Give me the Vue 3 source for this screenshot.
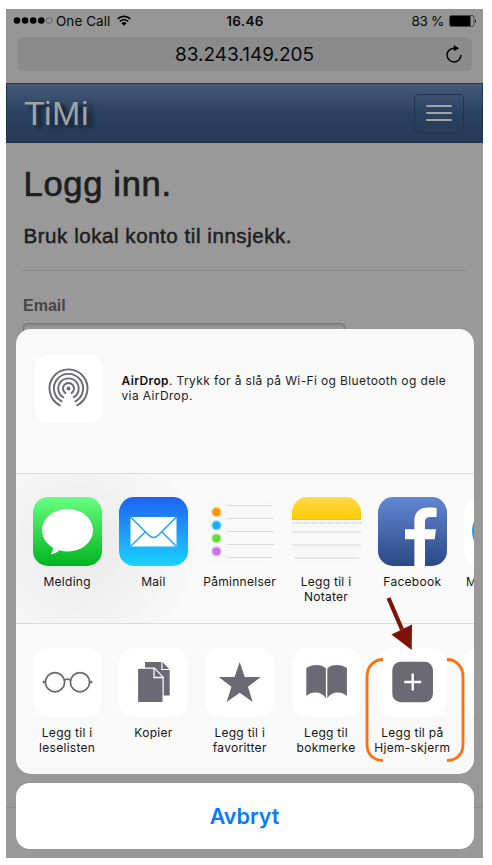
<script setup>
const apps = [
  { id: 'messages', label: ['Melding'] },
  { id: 'mail', label: ['Mail'] },
  { id: 'reminders', label: ['Påminnelser'] },
  { id: 'notes', label: ['Legg til i', 'Notater'] },
  { id: 'facebook', label: ['Facebook'] },
  { id: 'messenger', label: ['M'] }
]
const actions = [
  { id: 'glasses', label: ['Legg til i', 'leselisten'] },
  { id: 'copy', label: ['Kopier'] },
  { id: 'star', label: ['Legg til i', 'favoritter'] },
  { id: 'book', label: ['Legg til', 'bokmerke'] },
  { id: 'home', label: ['Legg til på', 'Hjem-skjerm'] },
  { id: 'more', label: [] }
]
const reminderDots = [
  { y: 15, color: '#ff9500' },
  { y: 28.3, color: '#1badf8' },
  { y: 41.3, color: '#63da38' },
  { y: 54.3, color: '#cc73e1' }
]
const reminderLines = [8.5, 21.5, 34.5, 47.5, 60.5]
</script>

<template>
  <div class="page">
    <div class="phone">
      <div class="status">
        <div class="carrier">
          <svg width="40" height="10" viewBox="0 0 40 10">
            <circle v-for="n in 4" :key="n" :cx="n * 8.1 - 4.1" cy="4.5" r="3.3" fill="#000" />
            <circle cx="36.2" cy="4.5" r="2.9" fill="none" stroke="#555" stroke-width=".7" />
          </svg>
          <span class="carrier-name">One Call</span>
          <svg class="wifi" width="16" height="12" viewBox="0 0 16 12">
            <g fill="none" stroke="#000" stroke-width="1.6">
              <path d="M1.600 3.900a9.300 9.300 0 0 1 12.800 0" />
              <path d="M3.800 6.500a6.100 6.100 0 0 1 8.400 0" />
            </g>
            <path d="M5.500 8.200a3.700 3.700 0 0 1 5 0L8 10.700z" />
          </svg>
        </div>
        <span class="time">16.46</span>
        <div class="power">
          <span class="percent">83 %</span>
          <svg width="28" height="12" viewBox="0 0 28 12">
            <rect x=".5" y=".5" width="24.500" height="11" rx="2" fill="none" stroke="#333" stroke-width=".8" />
            <rect x="1" y="1" width="20.500" height="10" rx="1" fill="#000" />
            <path d="M26 4q2 2 0 4z" fill="#111" />
          </svg>
        </div>
      </div>
      <div class="address">
        <span class="url">83.243.149.205</span>
        <svg class="reload" width="18" height="20" viewBox="0 0 18 20">
          <path d="M9.500 4.200A6.900 6.900 0 1 0 15.900 11" fill="none" stroke="#050505" stroke-width="1.500" />
          <path d="M8.800 1L14 4.200 8.800 7.200z" fill="#050505" />
        </svg>
      </div>
      <div class="navbar">
        <span class="brand">TiMi</span>
        <div class="toggle"><i /><i /><i /></div>
      </div>
      <div class="content">
        <h1>Logg inn.</h1>
        <h2>Bruk lokal konto til innsjekk.</h2>
        <div class="rule" />
        <label>Email</label>
        <div class="field" />
      </div>
      <div class="footer-rule" />

      <div class="overlay">
        <div class="sheet">
          <div class="airdrop">
            <div class="tile">
              <svg width="69" height="69" viewBox="0 0 69 69">
                <circle cx="34.500" cy="34.500" r="1.900" fill="#6b6a74" />
                <g fill="none" stroke="#6b6a74" stroke-width="1.900" stroke-linecap="round">
                  <path d="M31.500 39.100a5.500 5.500 0 1 1 6 0" />
                  <path d="M29.300 43.300a10.200 10.200 0 1 1 10.400 0" />
                  <path d="M27.600 47.300a14.600 14.600 0 1 1 13.800 0" />
                  <path d="M25.800 51.300a19 19 0 1 1 17.400 0" />
                </g>
              </svg>
            </div>
            <p><b>AirDrop</b>. Trykk for å slå på Wi-Fi og Bluetooth og dele<br>via AirDrop.</p>
          </div>

          <div class="row apps">
            <div v-for="app in apps" :key="app.id" class="cell">
              <div class="tile" :class="app.id">
                <svg v-if="app.id === 'messages'" width="69" height="69" viewBox="0 0 69 69">
                  <path d="M34.700 12C20.500 12 9.200 21.400 9.200 33.300c0 7.500 4.300 13.800 11 17.600-.3 2.500-1.300 4.600-2.600 6.400 3.600-.4 6.600-1.800 8.700-4 2.700.8 5.500 1.200 8.400 1.200 14 0 25.300-9.300 25.300-21.200S48.700 12 34.700 12z" fill="#fff" />
                </svg>
                <svg v-else-if="app.id === 'mail'" width="69" height="69" viewBox="0 0 69 69">
                  <path d="M11.500 20h46v29.500h-46z" fill="#fff" />
                  <path d="M11.500 20l18.300 18.200q4.700 4.700 9.400 0L57.500 20M11.500 49.500l15-15M57.500 49.500l-15-15" fill="none" stroke="#219cf8" stroke-width="1.400" />
                </svg>
                <svg v-else-if="app.id === 'reminders'" width="69" height="69" viewBox="0 0 69 69">
                  <g v-for="dot in reminderDots" :key="dot.y" :fill="dot.color">
                    <circle cx="11.500" :cy="dot.y" r="5.300" opacity=".4" />
                    <circle cx="11.500" :cy="dot.y" r="3.900" />
                  </g>
                  <path v-for="y in reminderLines" :key="y" :d="`M22 ${y}H${y === 8.5 || y === 60.5 ? 67 : 69}`" stroke="#d9d9d9" />
                </svg>
                <svg v-else-if="app.id === 'notes'" width="69" height="69" viewBox="0 0 69 69">
                  <defs>
                    <linearGradient id="notes-top" x2="0" y2="1">
                      <stop stop-color="#ffd94e" /><stop offset="1" stop-color="#ffca00" />
                    </linearGradient>
                  </defs>
                  <path d="M0 0h69v22H0z" fill="url(#notes-top)" />
                  <path d="M0 22.500h69" stroke="#c9bb83" />
                  <path d="M0 26h69" stroke="#b5b5b5" stroke-dasharray="1 1" />
                  <path d="M0 35h69M0 48h69M2 61h65" stroke="#d7d7d7" />
                </svg>
                <svg v-else-if="app.id === 'facebook'" width="69" height="69" viewBox="0 0 69 69">
                  <path d="M36.400 69V42.300h-9.400V32.200h9.400V24c0-8.500 5-13.500 13.200-13.500 4 0 7 .1 9 .4v9h-6c-4.500 0-5.600 2.200-5.600 5.500v6.800h11l-1.300 10.100h-9.700v26.700z" fill="#fff" />
                </svg>
                <svg v-else width="69" height="69" viewBox="0 0 69 69">
                  <circle cx="34.500" cy="34" r="26.500" fill="#16a3f5" />
                </svg>
              </div>
              <div class="label"><span v-for="line in app.label" :key="line">{{ line }}</span></div>
            </div>
          </div>

          <div class="row actions">
            <div v-for="action in actions" :key="action.id" class="cell">
              <div class="tile">
                <svg v-if="action.id === 'glasses'" width="69" height="69" viewBox="0 0 69 69">
                  <g fill="none" stroke="#6b6a74" stroke-width="1.800">
                    <circle cx="22" cy="34.200" r="9.600" />
                    <circle cx="47" cy="34.200" r="9.600" />
                    <path d="M31 32.500q3.500-2.800 7 0" />
                    <path d="M9.700 34h2.700M56.600 34h2.700" stroke-width="2.600" />
                  </g>
                </svg>
                <svg v-else-if="action.id === 'copy'" width="69" height="69" viewBox="0 0 69 69">
                  <g fill="#6b6a74">
                    <path d="M26 14h17.500l7.200 7.500v26H26z" />
                    <path d="M42.900 13.700v7.800H51" fill="none" stroke="#fff" stroke-width="1.200" />
                    <path d="M18.500 20.200h17l8.600 9v25.300H18.500z" stroke="#fff" stroke-width="1.200" />
                    <path d="M35 20.200v9.300h9.500" fill="none" stroke="#fff" stroke-width="1.300" />
                  </g>
                </svg>
                <svg v-else-if="action.id === 'star'" width="69" height="69" viewBox="0 0 69 69">
                  <path d="M34.700 14l5.100 15.100h15.900L43 38.700 47.700 54 34.700 44.800 21.700 54l4.700-15.300L13.700 29.100h15.900z" fill="#6b6a74" />
                </svg>
                <svg v-else-if="action.id === 'book'" width="69" height="69" viewBox="0 0 69 69">
                  <path d="M14.300 20C20 15.900 30 15.900 33.900 20.500V50.500C29.500 43.300 20 43 14.300 48zM54.900 20C49.200 15.900 39.200 15.900 35.300 20.500V50.500C39.700 43.300 49.200 43 54.900 48z" fill="#6b6a74" />
                </svg>
                <svg v-else-if="action.id === 'home'" width="69" height="69" viewBox="0 0 69 69">
                  <rect x="14.300" y="13.800" width="40.700" height="40.500" rx="8.500" fill="#6b6a74" />
                  <path d="M34.700 25.500v17M26.200 34h17" stroke="#fff" stroke-width="2.400" />
                </svg>
              </div>
              <div class="label"><span v-for="line in action.label" :key="line">{{ line }}</span></div>
            </div>
          </div>
        </div>
        <div class="cancel">Avbryt</div>
      </div>
      <svg class="marks" width="110" height="175" viewBox="360 592 110 175">
        <path d="M383 659.500c-9 0-16 7-16 17v68c0 10 7 16 16 16M447 659.500c9 0 16 7 16 17v68c0 10-7 16-16 16" fill="none" stroke="#ff6f0d" stroke-width="2.800" />
        <path d="M388.500 598L402 629.500" stroke="#7d1206" stroke-width="4.200" />
        <path d="M391.500 634.500l20.500-10-.3 25.500z" fill="#7d1206" />
      </svg>
    </div>
  </div>
</template>

<style>
body { background: #fff; }
</style>

<style scoped>
* { box-sizing: border-box; }
svg { display: block; flex: none; }
.page { width: 492px; height: 865px; padding: 9px 9px 7px 6px; background: #fff; overflow: hidden; font-family: Inter, "Liberation Sans", sans-serif; }
.phone { position: relative; width: 477px; height: 849px; background: #999; overflow: hidden; display: flex; flex-direction: column; }
.status { height: 28px; flex: none; background: #969696; padding: 0 6px 4px 7px; display: grid; grid-template-columns: 1fr auto 1fr; align-items: center; font-size: 13.500px; color: #0a0a0a; }
.carrier { display: flex; align-items: center; }
.carrier-name { margin-left: 3px; white-space: nowrap; letter-spacing: .05px; }
.wifi { margin-left: 6px; }
.time { font-weight: 600; letter-spacing: .3px; }
.power { display: flex; align-items: center; justify-content: flex-end; gap: 5px; }
.percent { white-space: nowrap; letter-spacing: -.3px; }
.address { position: relative; height: 46px; flex: none; padding: 0 11px 12px; background: #969696; display: flex; }
.url { flex: 1; height: 34px; line-height: 35px; border-radius: 6px; background: #8b8b8b; text-align: center; font-size: 19px; color: #080808; }
.reload { position: absolute; right: 20px; top: 7px; }
.navbar { height: 60px; flex: none; border: 1px solid #20364f; background: linear-gradient(#465a7a, #29425f 50%, #243b55); display: flex; align-items: center; justify-content: space-between; padding: 0 18px 0 17px; }
.brand { font: 34px/58px "Liberation Sans", sans-serif; letter-spacing: .5px; color: #a2a2a2; text-shadow: 5px 3px 4px #101b28; }
.toggle { width: 50px; height: 39px; border: 1px solid #20364f; border-radius: 5px; display: flex; flex-direction: column; align-items: center; justify-content: center; gap: 4.500px; }
.toggle i { width: 26px; height: 2.500px; border-radius: 1px; background: #a3a3a3; }
.content { padding: 0 17px; font-family: "Liberation Sans", Arial, sans-serif; color: #1e1e1e; }
h1 { margin: 20px 0 0 .5px; font-size: 34.500px; line-height: 42px; font-weight: 400; letter-spacing: .7px; -webkit-text-stroke: .7px; }
h2 { margin: 18px 0 0 .5px; font-size: 20.500px; line-height: 26px; font-weight: 400; letter-spacing: .56px; -webkit-text-stroke: .5px; white-space: nowrap; }
.rule { height: 1px; margin-top: 21px; background: #8d8d8d; }
label { display: block; margin-top: 26px; font-size: 16px; line-height: 18px; font-weight: 700; color: #454545; }
.field { width: 322px; height: 34px; margin-top: 8px; border: 1px solid #757575; border-radius: 4px; box-shadow: inset 0 2px 2px #858585; }
.footer-rule { height: 1px; background: #8c8c8c; margin-top: auto; margin-bottom: 50px; flex: none; }
.overlay { position: absolute; left: 9.500px; top: 320px; width: 458px; }
.sheet { height: 444.500px; border-radius: 15px; background: #f9f9f9; overflow: hidden; }
.airdrop { height: 145px; border-bottom: 1.500px solid #dcdcdc; padding: 24.500px 0 0 18.500px; display: flex; }
.airdrop p { margin: 19px 0 0 18.500px; font-size: 12px; line-height: 15px; color: #222; white-space: nowrap; letter-spacing: .38px; }
.airdrop b { font-weight: 600; color: #111; }
.tile { width: 69px; height: 69px; border-radius: 15px; background: #fff; overflow: hidden; flex: none; }
.row { display: flex; padding-left: 8.500px; height: 150px; }
.apps { padding-top: 23px; border-bottom: 1.500px solid #dcdcdc; background: radial-gradient(circle at 65px 75px, #ececec 20px, #f9f9f900 120px); }
.actions { padding-top: 24px; }
.cell { width: 86.300px; flex: none; display: flex; flex-direction: column; align-items: center; }
.label { margin-top: 7.500px; display: flex; flex-direction: column; align-items: center; font-size: 12px; line-height: 15px; color: #151515; white-space: nowrap; letter-spacing: .28px; }
.cell:last-child .label { align-self: flex-start; padding-left: 10.500px; }
.messages { background: linear-gradient(#67ff81, #01b41f); }
.mail { background: linear-gradient(#1e62f0, #19d3ff); }
.reminders, .notes { background: #f8f8f8; }
.facebook { background: linear-gradient(#6286d3, #2b4884); }
.cancel { margin-top: 9px; height: 66px; border-radius: 14px; background: #fff; color: #087aff; font-size: 21.500px; font-weight: 600; line-height: 67px; text-align: center; }
.marks { position: absolute; left: 354px; top: 583px; }
</style>
